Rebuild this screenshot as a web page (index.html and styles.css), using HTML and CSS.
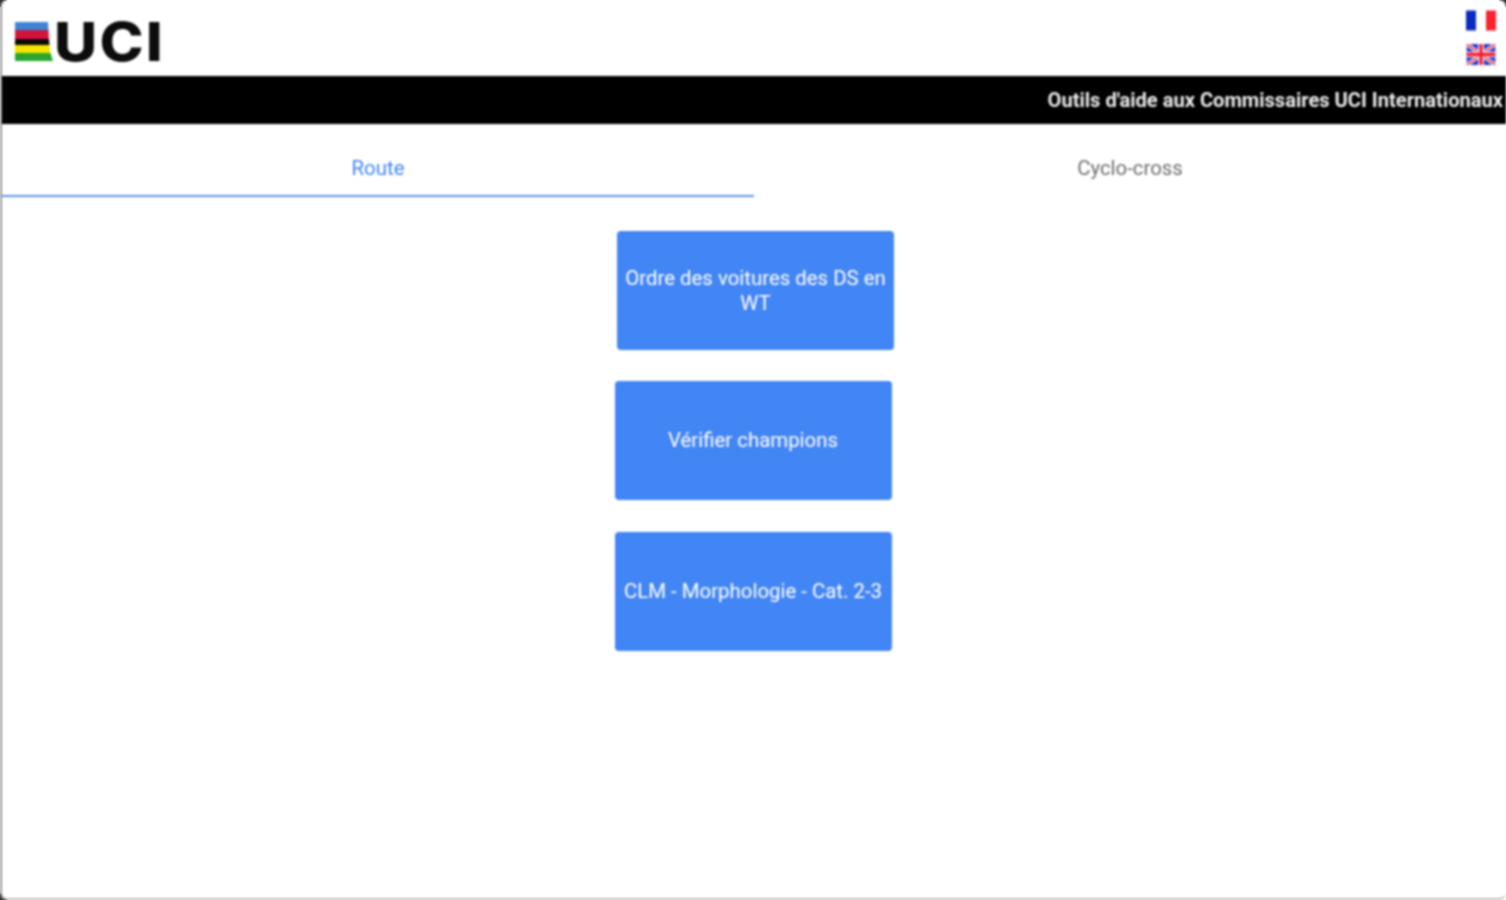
FILE: index.html
```html
<!DOCTYPE html>
<html>
<head>
<meta charset="utf-8" />
<meta name="viewport" content="width=device-width, initial-scale=1" />
<title>Outils d'aide aux Commissaires UCI Internationaux</title>
<link rel="stylesheet" href="styles.css">
</head>
<body>

<div class="page">
	<div class="header">
		<div class="logo">
			<svg class="logoStripes" xmlns="http://www.w3.org/2000/svg" viewBox="0 0 38 39">
				<polygon points="0,0 33,0 33.5,8 0,8" fill="#3d84d6"/>
				<polygon points="0,8 33.5,8 34,17 0,17" fill="#d2143c"/>
				<polygon points="0,17 34,17 34.5,23 0,23" fill="#0a0a0a"/>
				<polygon points="0,23 34.5,23 35.5,31 0,31" fill="#f5e400"/>
				<polygon points="0,31 35.5,31 38,39 0,39" fill="#2aa52e"/>
			</svg>
			<span class="logoText">UCI</span>
		</div>
		<div class="flags">
			<svg class="flag" xmlns="http://www.w3.org/2000/svg" viewBox="0 0 30 20">
				<rect x="0" width="10" height="20" fill="#0a2bc0"/>
				<rect x="10" width="10" height="20" fill="#ffffff"/>
				<rect x="20" width="10" height="20" fill="#f8232f"/>
			</svg>
			<svg class="flag" xmlns="http://www.w3.org/2000/svg" viewBox="0 0 30 22">
				<rect width="30" height="22" fill="#2a36c8"/>
				<path d="M0,0 L30,22 M30,0 L0,22" stroke="#ffffff" stroke-width="4"/>
				<path d="M0,0 L30,22 M30,0 L0,22" stroke="#f01c30" stroke-width="1.5"/>
				<path d="M15,0 V22 M0,11 H30" stroke="#ffffff" stroke-width="6"/>
				<path d="M15,0 V22 M0,11 H30" stroke="#f01c30" stroke-width="3.5"/>
			</svg>
		</div>
	</div>

	<div class="titleBar">Outils d'aide aux Commissaires UCI Internationaux</div>

	<div class="tabs">
		<div class="tab active">Route</div>
		<div class="tab">Cyclo-cross</div>
	</div>

	<div class="menu">
		<button class="menuButton first">Ordre des voitures des DS en WT</button>
		<button class="menuButton">Vérifier champions</button>
		<button class="menuButton last">CLM - Morphologie - Cat. 2-3</button>
	</div>
</div>

</body>
</html>
```

FILE: styles.css
```css
html, body {
	margin: 0;
	padding: 0;
	width: 100%;
	height: 100%;
	font-family: Roboto, "Liberation Sans", sans-serif;
	overflow: hidden;
}

/* dark window corners showing behind the rounded page */
body {
	background:
		radial-gradient(circle at 0 0, rgb(50, 50, 50) 6px, transparent 8px),
		radial-gradient(circle at 100% 0, rgb(50, 50, 50) 6px, transparent 8px),
		radial-gradient(circle at 0 100%, rgb(50, 50, 50) 6px, transparent 8px),
		#fff;
}

.page {
	box-sizing: border-box;
	height: 900px;
	display: flex;
	flex-direction: column;
	background: #fff;
	border-left: 2px solid rgb(150, 150, 150);
	border-bottom: 2px solid rgb(190, 190, 190);
	border-radius: 7px;
	overflow: hidden;
	filter: blur(0.85px);
}

.header {
	height: 76px;
	flex: none;
	display: flex;
	justify-content: space-between;
	align-items: flex-start;
}

.logo {
	display: flex;
	align-items: center;
	height: 39px;
	margin: 22px 0 0 13px;
}

.logoStripes {
	width: 38px;
	height: 39px;
}

.logoText {
	margin: 2px 0 0 1px;
	font-family: Inter, sans-serif;
	font-weight: 800;
	font-size: 53px;
	line-height: 39px;
	letter-spacing: 2px;
	color: #0c0c0c;
	transform: scaleX(1.12);
	transform-origin: left center;
}

.flags {
	display: flex;
	flex-direction: column;
	gap: 13px;
	margin: 10px 10px 0 0;
}

.flag {
	display: block;
	width: 30px;
	height: 21px;
}

.titleBar {
	height: 48px;
	flex: none;
	display: flex;
	align-items: center;
	justify-content: flex-end;
	padding-right: 3px;
	background: #000;
	color: rgb(235, 235, 235);
	font-size: 20.1px;
	font-weight: 700;
	white-space: nowrap;
}

.tabs {
	display: flex;
	flex: none;
	height: 73px;
}

.tab {
	flex: 1;
	display: flex;
	align-items: center;
	justify-content: center;
	padding-top: 16px;
	padding-bottom: 2px;
	box-sizing: border-box;
	color: rgb(110, 110, 110);
	font-size: 20.4px;
}

.tab.active {
	color: rgb(66, 133, 244);
	border-bottom: 2px solid rgb(96, 146, 240);
	padding-bottom: 0;
}

.menu {
	display: flex;
	flex-direction: column;
	align-items: center;
	gap: 31px;
	padding: 34px 2px 0 0;
}

.menuButton {
	width: 277px;
	height: 119px;
	padding: 5px;
	background: rgb(66, 133, 244);
	border: 0;
	border-radius: 4px;
	color: #fff;
	font-family: inherit;
	font-size: 20.4px;
	line-height: 25px;
}

.menuButton.first {
	margin-left: 5px;
}

.menuButton.last {
	margin-top: 1px;
}
```
